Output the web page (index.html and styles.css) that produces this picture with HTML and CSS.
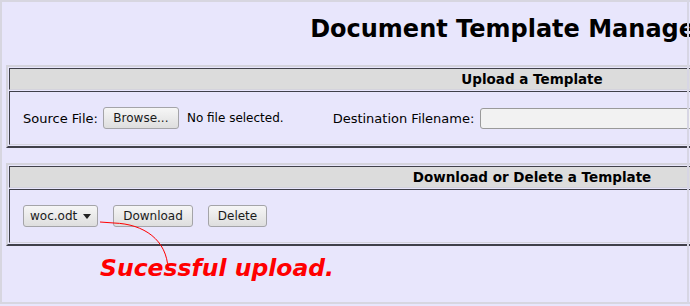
FILE: index.html
```html
<!DOCTYPE html>
<html lang="en">
<head>
    <meta charset="UTF-8">
    <title>Document Template Manager</title>
    <link rel="stylesheet" href="styles.css">
</head>
<body>
    <div class="page">
        <h1>Document Template Manager</h1>

        <!-- upload -->
        <table class="section">
            <tr><th>Upload a Template</th></tr>
            <tr>
                <td>
                    <div class="row">
                        <span class="label">Source File:</span>
                        <button class="btn browse">Browse...</button>
                        <span class="nofile">No file selected.</span>
                        <span class="label dest">Destination Filename:</span>
                        <input class="field" type="text">
                    </div>
                </td>
            </tr>
        </table>

        <!-- download / delete -->
        <table class="section second">
            <tr><th>Download or Delete a Template</th></tr>
            <tr>
                <td>
                    <div class="row">
                        <span class="btn select">woc.odt <span class="arrow"></span></span>
                        <button class="btn">Download</button>
                        <button class="btn">Delete</button>
                    </div>
                </td>
            </tr>
        </table>

        <p class="note">Sucessful upload.</p>

        <svg class="callout" width="200" height="80" viewBox="0 0 200 80">
            <path d="M0 12 L14 13 C 44 14, 67 30, 68 59" fill="none" stroke="#ff0000" stroke-width="1"/>
        </svg>
    </div>
</body>
</html>
```

FILE: styles.css
```css
html {
    overflow: hidden;
}

body {
    margin: 0;
    font-family: "DejaVu Sans", Verdana, sans-serif;
    font-size: 13px;
    background-color: #e8e6fc;
    color: #000;
}

.page {
    position: relative;
    width: 1063px;
    height: 300px;
    border: 2px solid #d7d6e0;
    border-right: none;
}

/* thin frame line over the right edge */
.page::after {
    content: "";
    position: absolute;
    left: 685px;
    top: -2px;
    width: 2px;
    height: 306px;
    background-color: #d7d6e4;
}

h1 {
    margin: 0;
    padding: 13px 50px 0 0;
    height: 63px;
    text-align: center;
    font-size: 24px;
    font-weight: bold;
    line-height: 28px;
    box-sizing: border-box;
}

.section {
    margin-left: 4px;
    width: 1052px;
    border: 2px solid;
    border-color: #d4d3dc #40404a #40404a #d4d3dc;
    border-spacing: 1px;
}

.section.second {
    margin-top: 15px;
}

.section th,
.section td {
    border: 1px solid;
    border-color: #40404a #d4d3dc #d4d3dc #40404a;
    padding: 0;
}

.section th {
    height: 20px;
    background-color: #dcdcdc;
    font-size: 13.5px;
    text-align: center;
}

.section td {
    height: 52px;
    padding-left: 13px;
}

.row {
    display: flex;
    align-items: center;
}

.btn {
    font-family: "DejaVu Sans", Verdana, sans-serif;
    font-size: 12px;
    color: #1a1a1a;
    height: 22px;
    padding: 0 10px;
    border: 1px solid #a4a4a8;
    border-radius: 3px;
    background: linear-gradient(#f6f6f6, #dedede);
    box-sizing: border-box;
    display: inline-flex;
    align-items: center;
}

.browse {
    margin-left: 5px;
    width: 76px;
    justify-content: center;
}

.nofile {
    margin-left: 8px;
    font-size: 12px;
}

.dest {
    margin-left: 49px;
}

.field {
    margin-left: 6px;
    width: 400px;
    height: 21px;
    border: 1px solid #9a9a9a;
    border-radius: 3px;
    background-color: #f2f2f2;
    box-sizing: border-box;
}

.select {
    width: 75px;
    padding: 0 6px;
    justify-content: space-between;
    font-size: 12px;
}

.arrow {
    width: 0;
    height: 0;
    border-left: 4px solid transparent;
    border-right: 4px solid transparent;
    border-top: 5px solid #222;
}

.select + .btn {
    margin-left: 15px;
    width: 80px;
    justify-content: center;
}

.select + .btn + .btn {
    margin-left: 15px;
    width: 59px;
    justify-content: center;
}

.note {
    margin: 8px 0 0 98px;
    font-size: 23.5px;
    font-weight: bold;
    font-style: italic;
    color: #ff0000;
}

.callout {
    position: absolute;
    left: 98px;
    top: 208px;
}
```
